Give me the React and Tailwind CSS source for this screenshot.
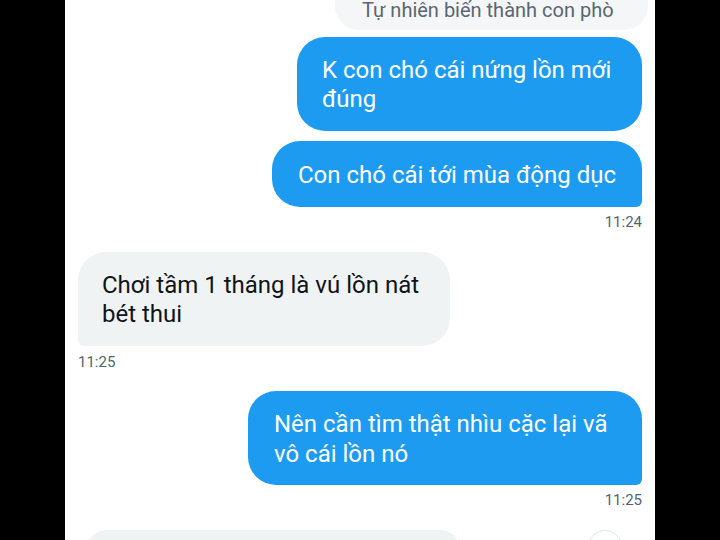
import React from "react";

const font = { fontFamily: "Roboto, 'Noto Sans', sans-serif" };

export default function App() {
  return (
    <div className="flex h-[540px] w-[720px] overflow-hidden bg-black" style={font}>
      <div className="w-[65px] shrink-0 bg-black" />
      <div className="flex w-[590px] shrink-0 flex-col overflow-hidden bg-white px-[13px]">
        <div className="mr-[-6px] mt-[-20px] h-[50px] w-[313px] shrink-0 self-end whitespace-nowrap rounded-[24px] bg-[#f4f6f7] pl-[27px] pt-[18px] text-[20px] leading-[24px] text-[#5b6670]">
          Tự nhiên biến thành con phò
        </div>
        <div className="mt-[7px] w-[345px] shrink-0 self-end rounded-[28px] bg-[#1d9bf0] pl-[25px] pr-[20px] pt-[19px] pb-[17px] text-[24px] leading-[29px] text-white">
          K con chó cái nứng lồn mới đúng
        </div>
        <div className="mt-[10px] w-[370px] shrink-0 self-end whitespace-nowrap rounded-[28px] rounded-br-[6px] bg-[#1d9bf0] pl-[26px] pr-[16px] pt-[19px] pb-[17px] text-[24px] leading-[30px] text-white">
          Con chó cái tới mùa động dục
        </div>
        <div className="mt-[6px] self-end text-[15px] leading-[18px] text-[#536471]">11:24</div>
        <div className="mt-[21px] w-[372px] shrink-0 self-start rounded-[28px] rounded-bl-[6px] bg-[#eff3f4] pl-[24px] pr-[20px] pt-[19px] pb-[17px] text-[24px] leading-[29px] text-[#0f1419]">
          Chơi tầm 1 tháng là vú lồn nát bét thui
        </div>
        <div className="mt-[7px] self-start text-[15px] leading-[18px] text-[#536471]">11:25</div>
        <div className="mt-[20px] w-[394px] shrink-0 self-end rounded-[28px] rounded-br-[6px] bg-[#1d9bf0] pl-[26px] pr-[20px] pt-[18px] pb-[16px] text-[24px] leading-[30px] text-white">
          Nên cần tìm thật nhìu cặc lại vã vô cái lồn nó
        </div>
        <div className="mt-[6px] self-end text-[15px] leading-[18px] text-[#536471]">11:25</div>
        <div className="mt-[21px] flex shrink-0 items-start justify-between">
          <div className="ml-[9px] h-[40px] w-[373px] rounded-[28px] bg-[#eff3f4]" />
          <div className="mr-[20px] h-[34px] w-[34px] rounded-full border border-[#e1e6e9]" />
        </div>
      </div>
      <div className="flex-1 bg-black" />
    </div>
  );
}
